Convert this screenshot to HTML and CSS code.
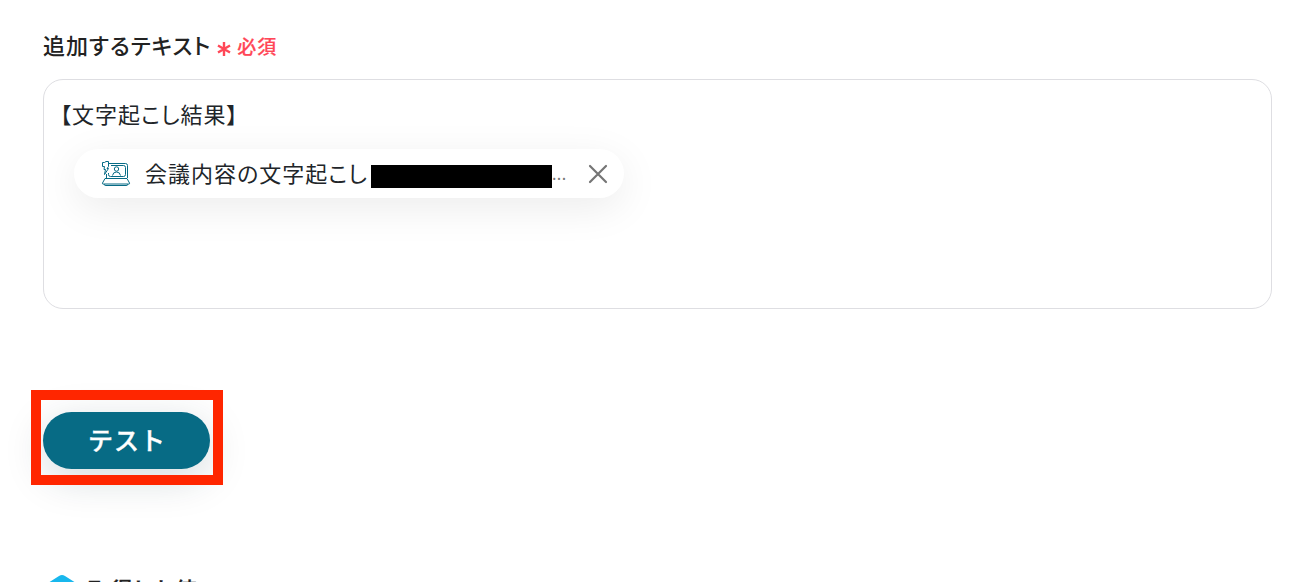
FILE: index.html
```
<!DOCTYPE html>
<html lang="ja">
<head>
    <meta charset="UTF-8">
    <meta name="viewport" content="width=device-width, initial-scale=1.0">
    <title>追加するテキスト</title>
    <link rel="stylesheet" href="styles.css">
</head>
<body>
<div class="form-container">
    <div class="field-label">
        <span>追加するテキスト</span>
        <svg class="asterisk" width="14" height="16" viewBox="0 0 14 16">
            <path d="M7 1v14M1 4.5l12 7M13 4.5l-12 7"/>
        </svg>
        <span class="required">必須</span>
    </div>
    <div class="text-box">
        <div class="text-line">【文字起こし結果】</div>
        <div class="chip">
            <svg class="chip-icon" width="30" height="26" viewBox="0 0 30 26">
                <path d="M8 2.500h16.500q2 0 2 2V17M5.500 13v4M10 4.500h12.500q2 0 2 2v7q0 2-2 2h-13q-2 0-2-2V12"/>
                <path d="M4 17.500h22l2.500 4.500q.5 1-.8 1H2.300q-1.300 0-.8-1zM3 23q0 1.500 2 1.500h20q2 0 2-1.500"/>
                <path d="M1.500 1.500h2L5 .5h2.500v5l-1.500 2h1.500l-4 6 1-5H3l.5-3h-2z"/>
                <circle cx="15.500" cy="8" r="2.200"/>
                <path d="M11.500 14.500q.5-3.500 4-3.500t4 3.500"/>
            </svg>
            <span class="chip-text">会議内容の文字起こし</span>
            <span class="mask"></span>
            <span class="dots">...</span>
            <svg class="close" width="20" height="20" viewBox="0 0 20 20">
                <path d="M2 2l16 16M18 2l-16 16"/>
            </svg>
        </div>
    </div>
    <div class="action">
        <button type="button" class="test-button">テスト</button>
        <div class="highlight"></div>
    </div>
    <div class="result">
        <svg width="38" height="38" viewBox="0 0 38 38">
            <path d="M16 2q3-2 6 0l11 7q3 2 3 5v10q0 3-3 5l-11 7q-3 2-6 0l-11-7q-3-2-3-5V14q0-3 3-5z"/>
        </svg>
        <span>取得した値</span>
    </div>
</div>
</body>
</html>
```
FILE: styles.css
```
body {
    margin: 0;
    height: 582px;
    overflow: hidden;
    background-color: #fff;
    color: #222;
    font-family: "Noto Sans CJK JP", sans-serif;
    font-feature-settings: "palt";
}

.form-container {
    padding: 28px 36px 0 43px;
}

.field-label {
    display: flex;
    align-items: center;
    height: 32px;
    font-size: 22px;
    font-weight: 500;
    letter-spacing: 1px;
    white-space: nowrap;
}

.asterisk {
    margin: 9px 6px 0 6px;
    fill: none;
    stroke: #ff4757;
    stroke-width: 2.4;
}

.required {
    margin-top: 2px;
    color: #ff4757;
    font-size: 19px;
    -webkit-text-stroke: 0.2px #ff4757;
}

.text-box {
    box-sizing: border-box;
    height: 230px;
    margin-top: 19px;
    padding: 17px 16px;
    border: 1px solid #dedee2;
    border-radius: 20px;
    color: #212529;
    font-size: 22px;
    letter-spacing: 1px;
}

.text-line {
    height: 32px;
    line-height: 32px;
}

.chip {
    display: flex;
    align-items: center;
    box-sizing: border-box;
    width: 550px;
    height: 49px;
    margin: 20px 0 0 14px;
    padding-left: 27px;
    border-radius: 25px;
    background-color: #fff;
    box-shadow: 0 10px 40px rgba(0, 0, 0, 0.08);
}

.chip-icon {
    flex: none;
    fill: none;
    stroke: #076b85;
    stroke-width: 1;
}

.chip-text {
    width: 226px;
    margin: -4px 0 0 14px;
    white-space: nowrap;
}

.mask {
    width: 181px;
    height: 23px;
    margin-top: 5px;
    background-color: #000;
}

.dots {
    width: 36px;
    margin-top: -2px;
    color: #777;
    font-size: 16px;
    letter-spacing: 0.4px;
}

.close {
    fill: none;
    stroke: #757575;
    stroke-width: 2.2;
    stroke-linecap: round;
}

.action {
    position: relative;
    width: 167px;
    margin-top: 103px;
}

/* frame drawn over the button and its shadow */
.highlight {
    position: absolute;
    top: -22px;
    left: -12px;
    box-sizing: border-box;
    width: 192px;
    height: 95px;
    border: 10px solid #ff2600;
}

.test-button {
    display: block;
    width: 167px;
    height: 57px;
    padding: 0 0 4px 1px;
    border: 0;
    border-radius: 29px;
    background-color: #076b85;
    box-shadow: 0 10px 40px rgba(7, 45, 60, 0.17);
    color: #fff;
    font-family: inherit;
    font-size: 25px;
    font-weight: 500;
    letter-spacing: 1px;
    -webkit-text-stroke: 0.4px #fff;
}

.result {
    display: flex;
    align-items: flex-start;
    margin-top: 105px;
    font-size: 22px;
    font-weight: 500;
    letter-spacing: 0.8px;
    line-height: 28px;
    -webkit-text-stroke: 0.3px #222;
}

.result svg {
    margin-right: 7px;
    fill: #18b7ed;
}
```
